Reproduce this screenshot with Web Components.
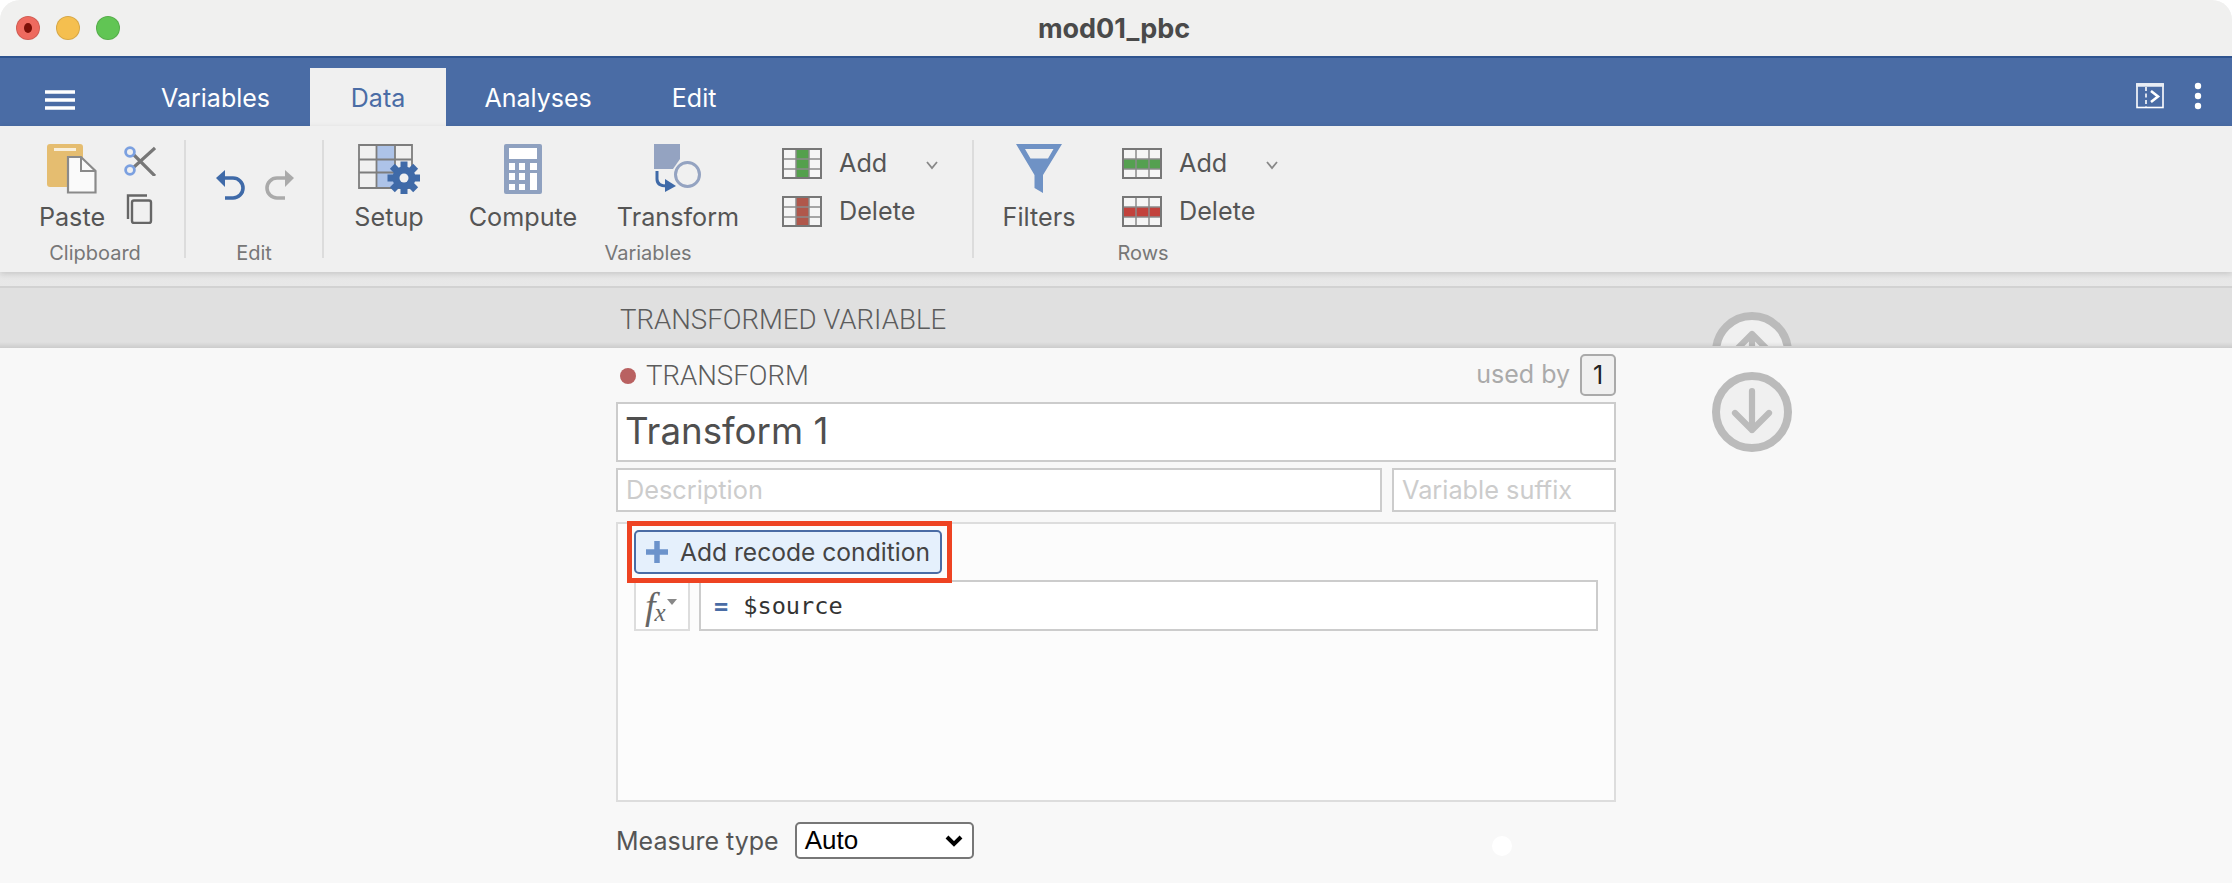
<!DOCTYPE html>
<html lang="en"><head><meta charset="utf-8"><title>mod01_pbc</title>
<style>
html,body{margin:0;background:#fff}
body{font-family:Inter,"Liberation Sans",sans-serif;color:#555;width:2232px;height:883px;overflow:hidden}
</style></head><body>
<app-window>
  <title-bar>mod01_pbc</title-bar>
  <tab-bar></tab-bar>
  <rib-bon></rib-bon>
  <band-head>TRANSFORMED VARIABLE</band-head>
  <edit-panel></edit-panel>
</app-window>
<script>
function def(name,html){customElements.define(name,class extends HTMLElement{constructor(){super();this.attachShadow({mode:'open'}).innerHTML=html}})}

def('app-window',`<style>:host{display:flex;flex-direction:column;width:2232px;height:883px;border-radius:20px 20px 0 0;overflow:hidden;background:#f8f8f8}</style><slot></slot>`);

def('title-bar',`<style>:host{display:flex;align-items:center;height:56px;background:#f0f0ef;position:relative;flex:none}
.l{display:flex;gap:16px;padding-left:16px}
i{display:block;width:24px;height:24px;border-radius:50%;box-sizing:border-box;border:1px solid rgba(0,0,0,.12)}
.r{background:#ee6a5f;display:flex;align-items:center;justify-content:center}.r::after{content:"";width:8px;height:10px;border-radius:50%;background:#7c1008}
.y{background:#f5bf4f}.g{background:#61c554}
.t{flex:1;text-align:center;font-weight:700;font-size:27px;color:#4a4a4a;padding-right:124px}
</style><div class="l"><i class="r"></i><i class="y"></i><i class="g"></i></div><div class="t"><slot></slot></div>`);

def('tab-item',`<style>:host{display:flex;align-items:center;justify-content:center;padding:0 40px;height:58px;font-size:25px;color:#fff;box-sizing:border-box;padding-top:1px}
:host([active]){background:#f0f0f0;color:#4a6ca5;width:136px;padding:1px 0 0;margin-right:-1.5px}</style><slot></slot>`);

def('tab-bar',`<style>:host{display:flex;align-items:flex-end;height:70px;box-sizing:border-box;background:#4a6ca5;border-top:2px solid #2f548f;flex:none}
.m{width:121px;height:52px;display:flex;align-items:center;padding-left:45px;box-sizing:border-box}
.s{margin-left:auto;display:flex;align-items:center;height:68px;padding:7px 30px 0 0;box-sizing:border-box;gap:30px}
</style><div class="m"><svg width="30" height="20" viewBox="0 0 30 20"><path d="M0 2H30M0 10H30M0 18H30" stroke="#fff" stroke-width="3.4"/></svg></div>
<tab-item>Variables</tab-item><tab-item active>Data</tab-item><tab-item>Analyses</tab-item><tab-item>Edit</tab-item>
<div class="s"><svg width="28" height="26" viewBox="0 0 28 26" fill="none" stroke="#fff"><rect x="1" y="1" width="26" height="23.5" stroke-width="1.6"/><path d="M0 2H28" stroke-width="3.5" stroke="#e8edf5"/><path d="M10 4V24" stroke-width="1.6" stroke-dasharray="4 2.5"/><path d="M15 8L22 13.5L15 19" stroke-width="2.6"/></svg>
<svg width="8" height="28" viewBox="0 0 8 28" fill="#fff"><circle cx="4" cy="4" r="3.2"/><circle cx="4" cy="14" r="3.2"/><circle cx="4" cy="24" r="3.2"/></svg></div>`);

def('rib-group',`<style>:host{display:flex;flex-direction:column;flex:none;box-sizing:border-box;padding-top:18px}
.c{display:flex;height:96px;align-items:flex-start}
.g{height:26px;line-height:26px;text-align:center;font-size:20px;color:#777}
</style><div class="c"><slot></slot></div><div class="g"><slot name="label"></slot></div>`);

def('rib-sep',`<style>:host{display:block;flex:none;width:2px;height:118px;margin-top:14px;background:#dcdcdc}</style>`);

def('rib-big',`<style>:host{display:flex;flex-direction:column;align-items:center;flex:none}
.i{height:50px;display:flex}.t{margin-top:8px;line-height:30px;font-size:25.2px;color:#555;white-space:nowrap}
</style><div class="i"><slot name="icon"></slot></div><div class="t"><slot></slot></div>`);

def('rib-small',`<style>:host{display:flex;align-items:center;height:31px;gap:17px;font-size:25.2px;color:#555}
.t{width:69px;white-space:nowrap;line-height:31px}
</style><slot name="icon"></slot><div class="t"><slot></slot></div><slot name="chev"></slot>`);

class GridIcon extends HTMLElement{constructor(){super();
  const k=this.getAttribute('kind'),col={ag:'#54a04c',ad:'#b0574b',rg:'#55a050',rd:'#c2423c'}[k];
  const fill=k[0]=='a'?`<rect x="14" y="1" width="13" height="29" fill="${col}"/>`:`<rect x="1" y="11" width="38" height="10" fill="${col}"/>`;
  this.attachShadow({mode:'open'}).innerHTML=`<style>:host{display:block;width:40px;height:31px}svg{display:block}</style><svg width="40" height="31" viewBox="0 0 40 31"><rect x="1" y="1" width="38" height="29" fill="#f5f5f5"/>${fill}<path d="M14 1V30M27 1V30M1 11H39M1 21H39" stroke="#8a8a8a" stroke-width="1.5" fill="none"/><rect x="1" y="1" width="38" height="29" fill="none" stroke="#777" stroke-width="2"/></svg>`}}
customElements.define('grid-icon',GridIcon);

const chev=`<svg slot="chev" width="14" height="10" viewBox="0 0 14 10" style="margin-top:2px"><path d="M2 2L7 8L12 2" fill="none" stroke="#888" stroke-width="1.8"/></svg>`;
const gearTeeth=[0,45,90,135,180,225,270,315].map(a=>`<rect x="400.5" y="161.5" width="7" height="8" fill="#3f6aa8" transform="rotate(${a} 404 178)"/>`).join('');

def('rib-bon',`<style>:host{display:flex;height:146px;background:#f0f0f0;flex:none;position:relative;z-index:2;box-shadow:0 2px 6px rgba(0,0,0,.14)}
.col{display:flex;flex-direction:column;flex:none}
svg{display:block}
</style>
<rib-group style="width:184px">
  <rib-big style="width:66px;margin-left:39px">
    <svg slot="icon" width="50" height="50" viewBox="46 144 50 50"><rect x="46" y="144" width="36" height="43" rx="3" fill="#e5bd70"/><rect x="53" y="148" width="22" height="3" fill="#f8efdc"/><path d="M67 157H80L94.500 171V192.500H67Z" fill="#fafafa" stroke="#8a8a8a" stroke-width="2.2"/><path d="M80 157V171H94.500" fill="none" stroke="#8a8a8a" stroke-width="2"/></svg>Paste</rib-big>
  <div class="col" style="width:32px;margin-left:19px;padding-top:2px;gap:18px">
    <svg width="32" height="30" viewBox="124 146 32 30"><path d="M134 155L155 176M134 167L155 148" stroke="#777" stroke-width="3.2" fill="none"/><circle cx="130" cy="152" r="4.4" fill="none" stroke="#7ba0e0" stroke-width="2.8"/><circle cx="130" cy="170" r="4.4" fill="none" stroke="#7ba0e0" stroke-width="2.8"/></svg>
    <svg width="32" height="30" viewBox="124 194 32 30"><path d="M128 219V195.500H147" fill="none" stroke="#666" stroke-width="2.4"/><rect x="132" y="200.500" width="19" height="22.500" rx="2" fill="none" stroke="#666" stroke-width="2.4"/></svg>
  </div>
  <span slot="label" style="padding-left:6px">Clipboard</span>
</rib-group>
<rib-sep></rib-sep>
<rib-group style="width:136px">
  <div style="display:flex;gap:18px;margin-left:30px;margin-top:26px">
    <svg width="30" height="30" viewBox="0 0 30 30"><path d="M7 8H17A10 10 0 0 1 17 28H9" fill="none" stroke="#3f6aa8" stroke-width="3.6"/><path d="M0 8L9 0V17Z" fill="#3f6aa8"/></svg>
    <svg width="30" height="30" viewBox="0 0 30 30"><path d="M23 8H13A10 10 0 0 0 13 28H21" fill="none" stroke="#aaa" stroke-width="3.6"/><path d="M30 8L21 0V17Z" fill="#aaa"/></svg>
  </div>
  <span slot="label">Edit</span>
</rib-group>
<rib-sep></rib-sep>
<rib-group style="width:648px">
  <rib-big style="width:80px;margin-left:25px">
    <svg slot="icon" width="62" height="50" viewBox="358 144 62 50"><rect x="377" y="145" width="18" height="43" fill="#adc3e8"/><path d="M359 145H412V188H359ZM376.500 145V188M395 145V188M359 159.500H412M359 172.500H412" fill="none" stroke="#7d7d7d" stroke-width="1.8"/>${gearTeeth}<circle cx="404" cy="178" r="11.500" fill="#3f6aa8"/><circle cx="404" cy="178" r="4.500" fill="#f0f0f0"/></svg>Setup</rib-big>
  <rib-big style="width:114px;margin-left:37px">
    <svg slot="icon" width="38" height="50" viewBox="504 144 38 50"><rect x="504" y="144" width="38" height="50" rx="2" fill="#8fa1c0"/><rect x="509" y="148" width="28" height="11" fill="#fff"/><path d="M509 163h6v7h-6zM519 163h6v7h-6zM530 163h7v7h-7zM509 173h6v7h-6zM519 173h6v7h-6zM530 173h7v17h-7zM509 184h6v6h-6zM519 184h6v6h-6z" fill="#fff"/></svg>Compute</rib-big>
  <rib-big style="width:124px;margin-left:36px">
    <svg slot="icon" width="48" height="50" viewBox="654 145 48 50"><path d="M654 145H680V160L673 170H654Z" fill="#94a3c1"/><circle cx="687.500" cy="175.500" r="12" fill="none" stroke="#94a3c1" stroke-width="3"/><path d="M657 172V180Q657 187 667 187" fill="none" stroke="#3f6aa8" stroke-width="3"/><path d="M665 180L676 187L665 193Z" fill="#3f6aa8"/></svg>Transform</rib-big>
  <div class="col" style="margin-left:42px;padding-top:4px;gap:17px">
    <rib-small><grid-icon slot="icon" kind="ag"></grid-icon>Add${chev}</rib-small>
    <rib-small><grid-icon slot="icon" kind="ad"></grid-icon>Delete</rib-small>
  </div>
  <span slot="label">Variables</span>
</rib-group>
<rib-sep></rib-sep>
<rib-group style="width:338px">
  <rib-big style="width:80px;margin-left:25px">
    <svg slot="icon" width="46" height="50" viewBox="1016 144 46 50"><path fill-rule="evenodd" d="M1016 144H1062L1043 175V193L1034.500 188V175ZM1025 149L1030.500 158.500H1048L1053.500 149Z" fill="#6f92c5"/></svg>Filters</rib-big>
  <div class="col" style="margin-left:43px;padding-top:4px;gap:17px">
    <rib-small><grid-icon slot="icon" kind="rg"></grid-icon>Add${chev}</rib-small>
    <rib-small><grid-icon slot="icon" kind="rd"></grid-icon>Delete</rib-small>
  </div>
  <span slot="label">Rows</span>
</rib-group>`);

def('round-arrow',`<style>:host{display:block;width:80px;height:80px;flex:none}svg{display:block}</style><svg width="80" height="80" viewBox="0 0 80 80"><circle cx="40" cy="40" r="36" fill="#f0f0f0" stroke="#bbb" stroke-width="8"/><path d="M40 19V58M23 41L40 58L57 41" fill="none" stroke="#bbb" stroke-width="6.200" stroke-linecap="round" stroke-linejoin="round"/></svg>`);

def('band-head',`<style>:host{display:flex;height:76px;background:linear-gradient(#e7e7e7,#ebebeb);flex:none;position:relative}
.b{display:flex;flex:1;margin-top:14px;border-top:2px solid #d2d2d2;height:60px;background:#e0e0e0;overflow:hidden;position:relative}
.b::after{content:"";position:absolute;left:0;right:0;bottom:0;height:6px;background:linear-gradient(rgba(0,0,0,0),rgba(0,0,0,.09))}
.t{margin-left:620px;font-family:Roboto,Inter,sans-serif;font-size:27.6px;font-weight:300;color:#5c5c5c;line-height:64px;white-space:nowrap}
.w{margin-left:auto;margin-right:440px;margin-top:24px;height:34px;overflow:hidden;flex:none;width:80px}
.w round-arrow{transform:rotate(180deg)}
</style><div class="b"><div class="t"><slot></slot></div><div class="w"><round-arrow></round-arrow></div></div>`);

def('text-box',`<style>:host{display:flex;align-items:center;box-sizing:border-box;border:2px solid #ccc;background:#fff;white-space:nowrap}</style><slot></slot>`);

def('recode-button',`<style>:host{display:inline-flex;align-items:center;position:relative;box-sizing:border-box;height:44px;width:308px;border:2px solid #4a6ca5;border-radius:5px;background:#e5f0fc;font-size:24.6px;color:#444;padding-left:10px;gap:12px;white-space:nowrap}
.r{position:absolute;left:-9px;right:-12px;top:-11px;bottom:-11px;border:5px solid #ee4322;pointer-events:none}
svg{display:block;flex:none}
</style><svg width="22" height="22" viewBox="0 0 22 22"><path d="M11 0V22M0 11H22" stroke="#6c93cb" stroke-width="5.500"/></svg><slot></slot><div class="r"></div>`);

def('measure-select',`<style>:host{display:flex;align-items:center;justify-content:space-between;box-sizing:border-box;width:179px;height:37px;border:2px solid #777;border-radius:5px;background:#fff;font-family:"Liberation Sans",sans-serif;font-size:26px;color:#000;padding:0 9px 0 8px}
svg{display:block}</style><slot></slot><svg width="18" height="12" viewBox="0 0 18 12"><path d="M2 2L9 9L16 2" fill="none" stroke="#000" stroke-width="4"/></svg>`);

def('edit-panel',`<style>:host{display:flex;flex:1;background:#f8f8f8;position:relative;padding-left:616px}
.m{width:1000px;flex:none;padding-top:6px;display:flex;flex-direction:column;box-sizing:border-box}
.h{display:flex;align-items:center;height:42px}
.dot{width:16px;height:16px;border-radius:50%;background:#b96161;margin-left:4px;margin-top:2px}
.tr{margin-left:10px;font-family:Roboto,Inter,sans-serif;font-size:27.6px;font-weight:300;color:#5c5c5c}
.ub{margin-left:auto;font-size:25px;color:#aaa;margin-top:-2px}
.one{margin-left:10px;width:36px;height:42px;box-sizing:border-box;border:2px solid #aaa;border-radius:5px;background:#f0f0f0;color:#222;font-size:25px;display:flex;align-items:center;justify-content:center}
.name{margin-top:6px;height:60px;padding:0 0 4px 7px;font-size:36.7px;font-weight:400;color:#4f4f4f}
.row{display:flex;gap:10px;margin-top:6px}
.ph{height:44px;padding:0 0 2px 8px;font-size:25.3px;color:#ccc}
.rc{margin-top:10px;height:280px;box-sizing:border-box;border:2px solid #ddd;background:#fcfcfc;padding:6px 16px 0}
.fr{display:flex;gap:9px;margin-top:6px}
.fx{width:56px;height:51px;box-sizing:border-box;border:2px solid #ddd;background:#fff;display:flex;align-items:center;padding-left:9px;color:#666;font-family:"Liberation Serif",serif;font-style:italic}
.fx b{font-weight:400;font-size:38px}.fx u{text-decoration:none;font-size:25px;margin-top:14px;margin-left:-1px}
.fx s{display:block;width:0;height:0;border:5px solid transparent;border-top:6px solid #888;border-bottom:0;margin:-8px 0 0 1px}
.fm{width:899px;height:51px;padding-left:13px;font-family:"DejaVu Sans Mono",monospace;font-size:23.600px;color:#333;gap:15px}
.fm em{font-style:normal;font-weight:700;color:#4a6ca5}
.mt{display:flex;align-items:center;margin-top:20px;height:37px;font-size:25px;color:#555;gap:16px}
round-arrow{margin:24px 0 0 96px}
.sp{position:absolute;left:1492px;top:488px;width:20px;height:20px;border-radius:50%;background:#fff}
</style>
<div class="m">
  <div class="h"><span class="dot"></span><span class="tr">TRANSFORM</span><span class="ub">used by</span><span class="one">1</span></div>
  <text-box class="name">Transform 1</text-box>
  <div class="row"><text-box class="ph" style="width:766px">Description</text-box><text-box class="ph" style="width:224px">Variable suffix</text-box></div>
  <div class="rc">
    <recode-button>Add recode condition</recode-button>
    <div class="fr"><div class="fx"><b>f</b><u>x</u><s></s></div><text-box class="fm"><em>=</em><span>$source</span></text-box></div>
  </div>
  <div class="mt"><span>Measure type</span><measure-select>Auto</measure-select></div>
</div>
<round-arrow></round-arrow>
<div class="sp"></div>`);
</script>
</body></html>
